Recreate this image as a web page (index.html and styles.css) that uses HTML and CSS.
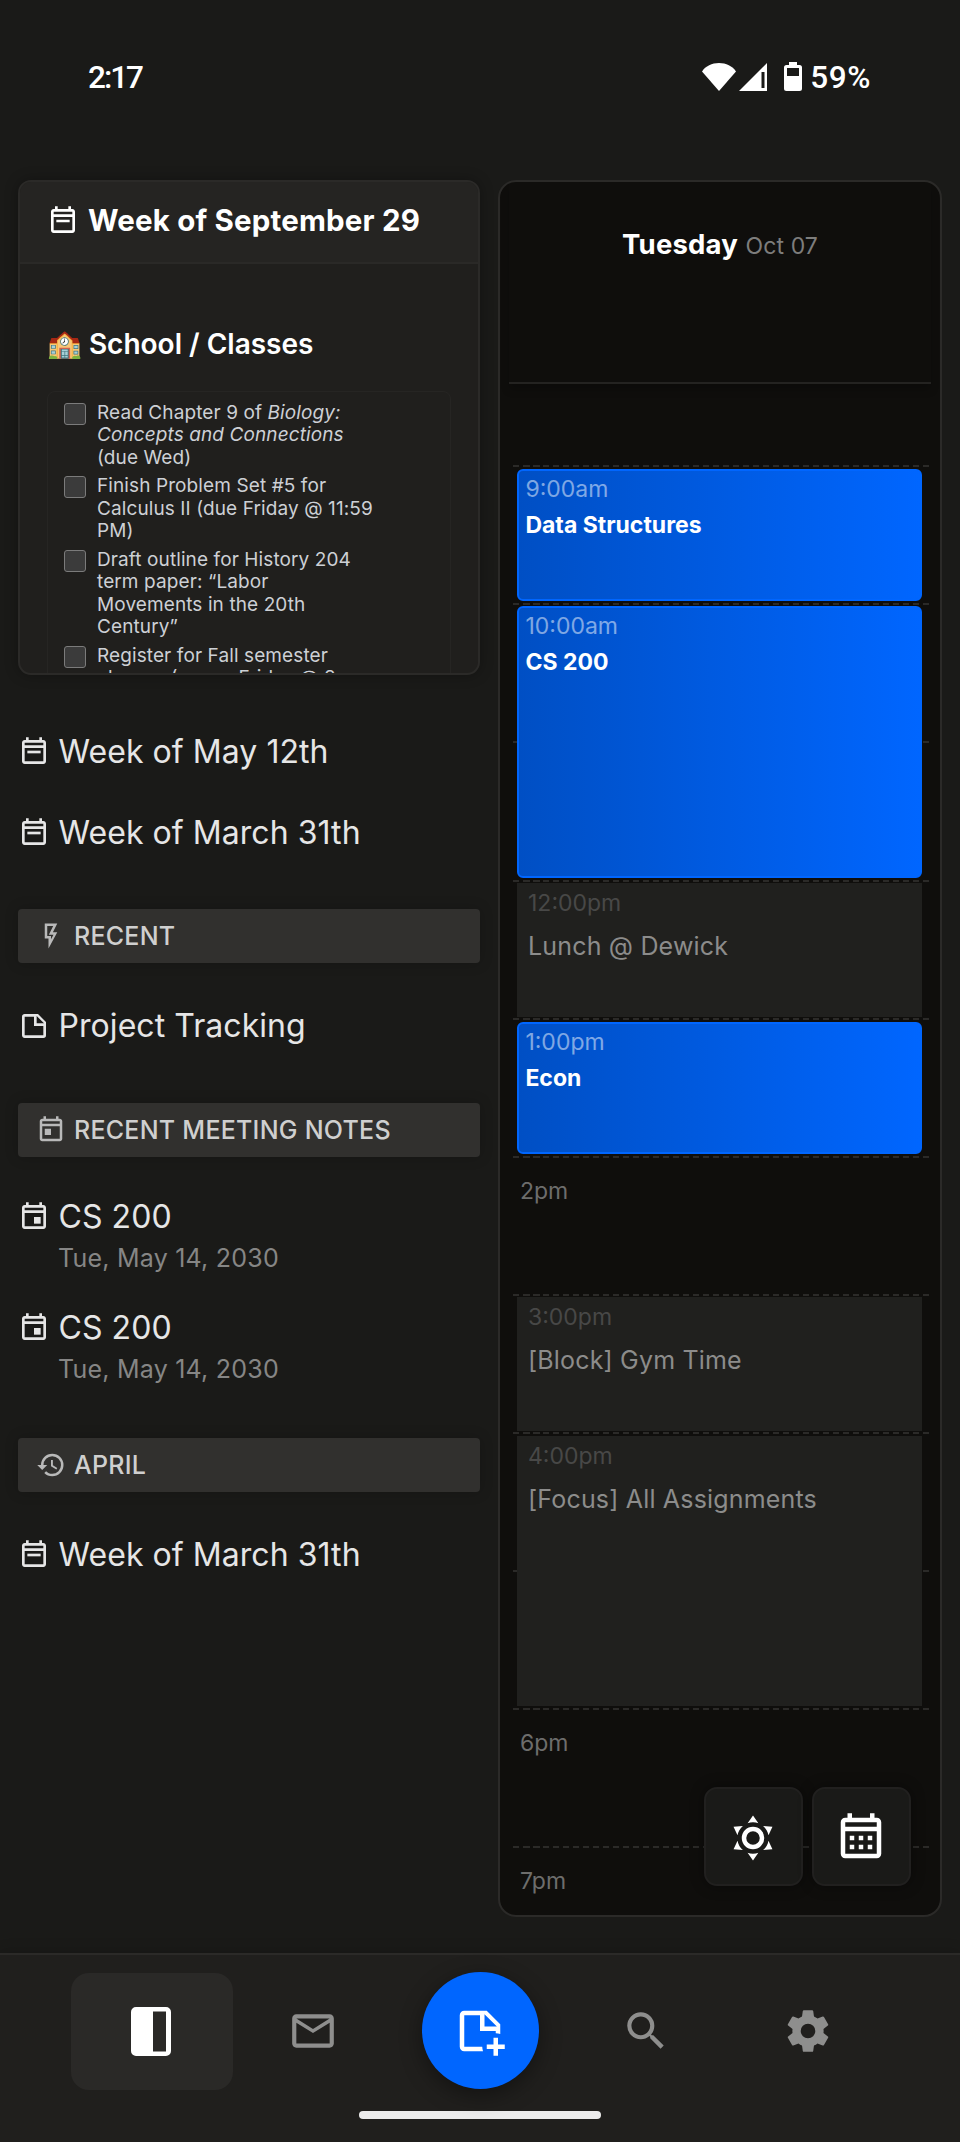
FILE: index.html
```html
<!DOCTYPE html>
<html lang="en">
  <head>
    <meta charset="UTF-8" />
    <meta name="viewport" content="width=device-width, initial-scale=1.0" />
    <title>Notes</title>
    <link rel="stylesheet" href="styles.css">
  </head>

  <body>
    <!-- shared icons -->
    <svg class="sprite">
      <symbol id="cal" viewBox="0 0 24 24">
        <path d="M19 3H18V1H16V3H8V1H6V3H5C3.89 3 3 3.9 3 5V19C3 20.1 3.89 21 5 21H19C20.1 21 21 20.1 21 19V5C21 3.9 20.1 3 19 3M19 19H5V9H19V19M19 7H5V5H19V7Z" />
      </symbol>
      <symbol id="cal-week" viewBox="0 0 24 24">
        <use href="#cal" width="24" height="24" />
        <path d="M7 11H17V13H7Z" />
      </symbol>
      <symbol id="cal-event" viewBox="0 0 24 24">
        <use href="#cal" width="24" height="24" />
        <path d="M12 12H17V17H12Z" />
      </symbol>
      <symbol id="cal-today" viewBox="0 0 24 24">
        <use href="#cal" width="24" height="24" />
        <path d="M7 11H12V16H7Z" />
      </symbol>
      <symbol id="cal-month" viewBox="0 0 24 24">
        <use href="#cal" width="24" height="24" />
        <path d="M7 11H9V13H7ZM11 11H13V13H11ZM15 11H17V13H15ZM7 15H9V17H7ZM11 15H13V17H11ZM15 15H17V17H15Z" />
      </symbol>
    </svg>

    <div class="status">
      <div class="clock">2:17</div>
      <div class="status-icons">
        <svg class="wifi" viewBox="0 0 34 28"><path d="M17 28L0 8.5C3.5 3 10 0 17 0S30.500 3 34 8.500Z" /></svg>
        <svg class="signal" viewBox="0 0 28 28"><path d="M28 0V28H0ZM22.500 9V25H25.500V9Z" fill-rule="evenodd" /></svg>
        <svg class="battery" viewBox="0 0 18 29"><path d="M5 0H13V3H15.500A2.500 2.500 0 0 1 18 5.500V26.500A2.500 2.500 0 0 1 15.500 29H2.500A2.500 2.500 0 0 1 0 26.500V5.500A2.500 2.500 0 0 1 2.500 3H5ZM3 6V14H15V6Z" fill-rule="evenodd" /></svg>
        <span class="percent">59%</span>
      </div>
    </div>

    <div class="main">
      <div class="left">
        <div class="note-card">
          <div class="note-header">
            <svg class="icon"><use href="#cal-week" /></svg>
            <span>Week of September 29</span>
          </div>
          <div class="note-body">
            <div class="note-title"><span class="emoji">🏫</span>School / Classes</div>
            <div class="tasks">
              <div class="task"><div class="check"></div><div class="task-text">Read Chapter 9 of <i>Biology:<br />Concepts and Connections</i><br />(due Wed)</div></div>
              <div class="task"><div class="check"></div><div class="task-text">Finish Problem Set #5 for<br />Calculus II (due Friday @ 11:59<br />PM)</div></div>
              <div class="task"><div class="check"></div><div class="task-text">Draft outline for History 204<br />term paper: “Labor<br />Movements in the 20th<br />Century”</div></div>
              <div class="task"><div class="check"></div><div class="task-text">Register for Fall semester<br />classes (opens Friday @ 8</div></div>
            </div>
          </div>
        </div>

        <div class="pinned">
          <div class="item"><svg class="icon"><use href="#cal-week" /></svg><span>Week of May 12th</span></div>
          <div class="item"><svg class="icon"><use href="#cal-week" /></svg><span>Week of March 31th</span></div>
        </div>

        <div class="bar">
          <svg class="bar-icon" viewBox="0 0 24 24"><path d="M7,2H17L13.5,9H17L10,22V14H7V2M9,4V12H12V14.66L14,11H10.24L13.76,4H9Z" /></svg>
          <span>RECENT</span>
        </div>
        <div class="item">
          <svg class="icon" viewBox="0 0 24 24"><path d="M14,10H19.5L14,4.5V10M5,3H15L21,9V19A2,2 0 0,1 19,21H5C3.89,21 3,20.1 3,19V5C3,3.89 3.89,3 5,3M5,5V19H19V12H12V5H5Z" /></svg>
          <span>Project Tracking</span>
        </div>

        <div class="bar">
          <svg class="bar-icon"><use href="#cal-today" /></svg>
          <span>RECENT MEETING NOTES</span>
        </div>
        <div class="meeting">
          <div class="item"><svg class="icon"><use href="#cal-event" /></svg><span>CS 200</span></div>
          <div class="date">Tue, May 14, 2030</div>
        </div>
        <div class="meeting">
          <div class="item"><svg class="icon"><use href="#cal-event" /></svg><span>CS 200</span></div>
          <div class="date">Tue, May 14, 2030</div>
        </div>

        <div class="bar">
          <svg class="bar-icon" viewBox="0 0 24 24"><path d="M13.5,8H12V13L16.28,15.54L17,14.33L13.5,12.25V8M13,3A9,9 0 0,0 4,12H1L4.96,16.03L9,12H6A7,7 0 0,1 13,5A7,7 0 0,1 20,12A7,7 0 0,1 13,19C11.07,19 9.32,18.21 8.06,16.94L6.64,18.36C8.27,20 10.5,21 13,21A9,9 0 0,0 22,12A9,9 0 0,0 13,3" /></svg>
          <span>APRIL</span>
        </div>
        <div class="item"><svg class="icon"><use href="#cal-week" /></svg><span>Week of March 31th</span></div>
      </div>

      <div class="day">
        <div class="day-header">
          <span class="weekday">Tuesday</span>
          <span class="monthday">Oct 07</span>
        </div>
        <div class="hours">
          <div class="hour h9"></div>
          <div class="hour h10"></div>
          <div class="hour h11"></div>
          <div class="hour h12"></div>
          <div class="hour h13"></div>
          <div class="hour h14">2pm</div>
          <div class="hour h15"></div>
          <div class="hour h16"></div>
          <div class="hour h17"></div>
          <div class="hour h18">6pm</div>
          <div class="hour h19">7pm</div>

          <div class="event h9"><div class="time">9:00am</div><div class="name">Data Structures</div></div>
          <div class="event h10 two"><div class="time">10:00am</div><div class="name">CS 200</div></div>
          <div class="block h12"><div class="time">12:00pm</div><div class="name">Lunch @ Dewick</div></div>
          <div class="event h13"><div class="time">1:00pm</div><div class="name">Econ</div></div>
          <div class="block h15"><div class="time">3:00pm</div><div class="name">[Block] Gym Time</div></div>
          <div class="block h16 two"><div class="time">4:00pm</div><div class="name">[Focus] All Assignments</div></div>
        </div>
        <div class="floating">
          <div class="float-btn">
            <svg viewBox="0 0 24 24"><path d="M12,7A5,5 0 0,1 17,12A5,5 0 0,1 12,17A5,5 0 0,1 7,12A5,5 0 0,1 12,7M12,9A3,3 0 0,0 9,12A3,3 0 0,0 12,15A3,3 0 0,0 15,12A3,3 0 0,0 12,9M12,2L14.39,5.42C13.65,5.15 12.84,5 12,5C11.16,5 10.35,5.15 9.61,5.42L12,2M3.34,7L7.5,6.65C6.9,7.16 6.36,7.78 5.94,8.5C5.5,9.24 5.25,10 5.11,10.79L3.34,7M3.36,17L5.12,13.23C5.26,14 5.53,14.78 5.95,15.5C6.37,16.24 6.91,16.86 7.5,17.37L3.36,17M20.65,7L18.88,10.79C18.74,10 18.47,9.23 18.05,8.5C17.63,7.78 17.1,7.15 16.5,6.64L20.65,7M20.64,17L16.5,17.36C17.09,16.85 17.62,16.22 18.04,15.5C18.46,14.77 18.73,14 18.87,13.21L20.64,17M12,22L9.59,18.56C10.33,18.83 11.14,19 12,19C12.82,19 13.63,18.83 14.37,18.56L12,22Z" /></svg>
          </div>
          <div class="float-btn"><svg><use href="#cal-month" /></svg></div>
        </div>
      </div>
    </div>

    <div class="nav">
      <div class="tabs">
        <div class="tab active">
          <svg class="panel" viewBox="0 0 40 49"><path d="M5 0H35A5 5 0 0 1 40 5V44A5 5 0 0 1 35 49H5A5 5 0 0 1 0 44V5A5 5 0 0 1 5 0ZM22 4.500V44.500H35V4.500Z" fill-rule="evenodd" /></svg>
        </div>
        <div class="tab">
          <svg viewBox="0 0 24 24"><path d="M22 6C22 4.9 21.1 4 20 4H4C2.9 4 2 4.9 2 6V18C2 19.1 2.9 20 4 20H20C21.1 20 22 19.1 22 18V6M20 6L12 11L4 6H20M20 18H4V8L12 13L20 8V18Z" /></svg>
        </div>
        <div class="add-slot">
          <div class="add">
            <svg viewBox="0 0 24 24"><path d="M15 3H5C3.9 3 3 3.9 3 5V19C3 20.1 3.9 21 5 21H13.35C13.13 20.37 13 19.7 13 19H5V5H12V12H19V13C19.7 13 20.37 13.13 21 13.35V9L15 3M14 10V4.5L19.5 10H14M23 18V20H20V23H18V20H15V18H18V15H20V18H23Z" /></svg>
          </div>
        </div>
        <div class="tab">
          <svg viewBox="0 0 24 24"><path d="M9.5,3A6.5,6.5 0 0,1 16,9.5C16,11.11 15.41,12.59 14.44,13.73L14.71,14H15.5L20.5,19L19,20.5L14,15.5V14.71L13.73,14.44C12.59,15.41 11.11,16 9.5,16A6.5,6.5 0 0,1 3,9.5A6.5,6.5 0 0,1 9.5,3M9.5,5C7,5 5,7 5,9.5C5,12 7,14 9.5,14C12,14 14,12 14,9.5C14,7 12,5 9.5,5Z" /></svg>
        </div>
        <div class="tab">
          <svg viewBox="0 0 24 24"><path d="M12,15.5A3.5,3.5 0 0,1 8.5,12A3.5,3.5 0 0,1 12,8.5A3.5,3.5 0 0,1 15.5,12A3.5,3.5 0 0,1 12,15.5M19.43,12.97C19.47,12.65 19.5,12.33 19.5,12C19.5,11.67 19.47,11.34 19.43,11L21.54,9.37C21.73,9.22 21.78,8.95 21.66,8.73L19.66,5.27C19.54,5.05 19.27,4.96 19.05,5.05L16.56,6.05C16.04,5.66 15.5,5.32 14.87,5.07L14.5,2.42C14.46,2.18 14.25,2 14,2H10C9.75,2 9.54,2.18 9.5,2.42L9.13,5.07C8.5,5.32 7.96,5.66 7.44,6.05L4.95,5.05C4.73,4.96 4.46,5.05 4.34,5.27L2.34,8.73C2.21,8.95 2.27,9.22 2.46,9.37L4.57,11C4.53,11.34 4.5,11.67 4.5,12C4.5,12.33 4.53,12.65 4.57,12.97L2.46,14.63C2.27,14.78 2.21,15.05 2.34,15.27L4.34,18.73C4.46,18.95 4.73,19.03 4.95,18.95L7.44,17.94C7.96,18.34 8.5,18.68 9.13,18.93L9.5,21.58C9.54,21.82 9.75,22 10,22H14C14.25,22 14.46,21.82 14.5,21.58L14.87,18.93C15.5,18.67 16.04,18.34 16.56,17.94L19.05,18.95C19.27,19.03 19.54,18.95 19.66,18.73L21.66,15.27C21.78,15.05 21.73,14.78 21.54,14.63L19.43,12.97Z" /></svg>
        </div>
      </div>
      <div class="home-bar"></div>
    </div>
  </body>
</html>
```
FILE: styles.css
```css
* {
  box-sizing: border-box;
}

body {
  margin: 0;
  height: 2142px;
  display: flex;
  flex-direction: column;
  background-color: #1a1a18;
  color: #e6e6e6;
  font-family: 'Inter', 'Liberation Sans', sans-serif;
  white-space: nowrap;
  overflow: hidden;
}

svg {
  display: block;
  flex-shrink: 0;
  fill: currentColor;
}

.sprite {
  display: none;
}

/* status bar */
.status {
  height: 180px;
  flex-shrink: 0;
  padding: 61px 89px 0 88px;
  display: flex;
  justify-content: space-between;
  align-items: flex-start;
  color: white;
  font-family: 'Roboto', sans-serif;
  font-size: 31.5px;
  font-weight: 500;
  line-height: 34px;
}

.clock {
  letter-spacing: -2px;
}

.percent {
  letter-spacing: 0.6px;
}

.status-icons {
  display: flex;
}

.wifi {
  width: 34px;
  height: 28px;
  margin: 2px 3px 0 0;
}

.signal {
  width: 28px;
  height: 28px;
  margin: 2px 17px 0 0;
}

.battery {
  width: 18px;
  height: 29px;
  margin: 1px 8px 0 0;
}

.main {
  height: 1737px;
  flex-shrink: 0;
  display: flex;
  gap: 18px;
  padding: 0 18px;
}

.left {
  width: 462px;
}

/* preview of the current week */
.note-card {
  height: 495px;
  border: 2px solid #2b2a28;
  border-radius: 13px;
  background-color: #201f1d;
  box-shadow: 0 0 14px rgba(0, 0, 0, 0.3);
  overflow: hidden;
}

.note-header {
  height: 82px;
  padding: 0 0 2px 27px;
  border-bottom: 2px solid #2a2927;
  background-color: #252422;
  display: flex;
  align-items: center;
  gap: 9px;
  color: white;
  font-size: 29.5px;
  font-weight: 700;
  letter-spacing: 0.17px;
}

.note-header span {
  margin-top: -2px;
}

.icon {
  width: 32px;
  height: 32px;
}

.note-body {
  padding: 60px 27px 0;
}

.note-title {
  height: 40px;
  line-height: 40px;
  color: white;
  font-size: 28px;
  font-weight: 600;
}

.emoji {
  font-family: 'Noto Color Emoji';
  font-size: 28px;
  line-height: 1;
  margin-right: 7px;
  vertical-align: 1px;
}

.tasks {
  margin-top: 27px;
  padding: 10px 16px;
  border: 1px solid #262523;
  border-radius: 8px;
}

.task {
  display: flex;
  margin-bottom: 6.6px;
}

.check {
  width: 22px;
  height: 22px;
  margin-top: 1px;
  border: 1px solid #7b7b7b;
  border-radius: 3px;
  background-color: #3b3b3b;
}

.task-text {
  margin-left: 11px;
  color: #cdd0d5;
  font-size: 19px;
  line-height: 22.3px;
  letter-spacing: 0.1px;
}

/* list of notes */
.pinned {
  margin: 36px 0 -1px;
}

.item {
  height: 81px;
  display: flex;
  align-items: center;
  gap: 8.5px;
  font-size: 32px;
  letter-spacing: 0.06px;
}

.item .icon {
  margin-top: 1px;
}

.bar {
  height: 54px;
  margin: 37px 0 22px;
  padding: 0 0 0 18px;
  border-radius: 4px;
  background-color: #31302e;
  box-shadow: 0 0 14px rgba(0, 0, 0, 0.2);
  display: flex;
  align-items: center;
  gap: 8px;
  color: #cfcfcf;
  font-size: 25px;
  font-weight: 500;
  letter-spacing: 0.25px;
}

.bar-icon {
  width: 30px;
  height: 30px;
  color: #b9b9b9;
}

.meeting {
  height: 111px;
}

.meeting .item {
  height: 75px;
}

.date {
  height: 30px;
  margin-top: -11px;
  padding-left: 40px;
  line-height: 30px;
  color: #868685;
  font-size: 25px;
  letter-spacing: 0.22px;
}

/* day calendar */
.day {
  position: relative;
  width: 444px;
  padding: 0 9px;
  border: 2px solid #2b2a28;
  border-radius: 18px;
  background-color: #0f0e0c;
  overflow: hidden;
}

.day-header {
  height: 202px;
  padding-top: 42px;
  border-bottom: 2px solid #242321;
  box-shadow: 0 6px 8px rgba(0, 0, 0, 0.2);
  line-height: 40px;
  text-align: center;
}

.weekday {
  color: white;
  font-size: 27.5px;
  font-weight: 700;
  letter-spacing: 0.2px;
}

.monthday {
  margin-left: 3px;
  color: #7d7d7c;
  font-size: 23px;
  letter-spacing: 0.1px;
}

.hours {
  margin-top: 81.3px;
  display: grid;
  grid-template-rows: repeat(11, 138.09px);
}

.hour {
  grid-column: 1;
  padding: 20px 0 0 11px;
  background: repeating-linear-gradient(90deg, #2b2a28 0 0.5px, transparent 0.5px 4px, #2b2a28 4px 10px) 0 0 / 420px 2px no-repeat;
  color: #6d6d6c;
  font-size: 23px;
  line-height: 30px;
}

.event,
.block {
  grid-column: 1;
  margin: 4px 9px 2px 8px;
  line-height: 30px;
}

.event {
  padding: 3px 6.4px;
  border: 2px solid #0066ff;
  border-radius: 6px;
  background: linear-gradient(90deg, #004fc4, #0066ff);
}

.event .time {
  color: rgba(255, 255, 255, 0.5);
  font-size: 23px;
}

.event .name {
  margin-top: 6px;
  color: white;
  font-size: 23px;
  font-weight: 700;
}

.block {
  margin: 3px 9px 1px 8px;
  padding: 5px 11px;
  background-color: #20201e;
}

.block .time {
  color: #484847;
  font-size: 23px;
}

.block .name {
  margin-top: 13px;
  color: #8c8c8b;
  font-size: 25px;
  letter-spacing: 0.18px;
}

.h9 { grid-row: 1; }
.h10 { grid-row: 2; }
.h11 { grid-row: 3; }
.h12 { grid-row: 4; }
.h13 { grid-row: 5; }
.h14 { grid-row: 6; }
.h15 { grid-row: 7; }
.h16 { grid-row: 8; }
.h17 { grid-row: 9; }
.h18 { grid-row: 10; }
.h19 { grid-row: 11; }

.h10.two {
  grid-row: 2 / span 2;
  margin-top: 3px;
}

.h16.two {
  grid-row: 8 / span 2;
  margin-top: 4px;
  margin-bottom: 2px;
}

/* buttons on top of the calendar */
.floating {
  position: absolute;
  right: 29px;
  bottom: 29px;
  display: flex;
  gap: 9px;
}

.float-btn {
  width: 99px;
  height: 99px;
  padding: 2px 1px 0 0;
  border: 2px solid #21201f;
  border-radius: 13px;
  background-color: #1a1a18;
  box-shadow: 0 0 14px rgba(0, 0, 0, 0.4);
  display: flex;
  align-items: center;
  justify-content: center;
  color: white;
}

.float-btn svg {
  width: 54px;
  height: 54px;
}

/* bottom navigation */
.nav {
  height: 189px;
  margin-top: 36px;
  flex-shrink: 0;
  padding: 18px 70px 0 71px;
  border-top: 2px solid #2b2a28;
  background-color: #201f1d;
  box-shadow: 0 0 14px rgba(0, 0, 0, 0.2);
}

.tabs {
  height: 117px;
  display: flex;
}

.tab {
  width: 162px;
  display: flex;
  align-items: center;
  justify-content: center;
  color: #8e8e8d;
}

.tab svg {
  width: 50px;
  height: 50px;
  margin: -2px 2px 0 0;
}

.active {
  border-radius: 18px;
  background-color: #2a2927;
  color: white;
}

.tab .panel {
  width: 40px;
  height: 49px;
  margin-top: 0;
}

.add-slot {
  flex: 1;
  display: flex;
  justify-content: center;
}

.add {
  width: 117px;
  height: 117px;
  margin-top: -1px;
  padding-right: 1px;
  border-radius: 50%;
  background-color: #0066ff;
  box-shadow: 0 6px 22px rgba(0, 0, 0, 0.4);
  display: flex;
  align-items: center;
  justify-content: center;
  color: white;
}

.add svg {
  width: 54px;
  height: 54px;
}

.home-bar {
  width: 242px;
  height: 8px;
  margin: 21px 0 0 288px;
  border-radius: 4px;
  background-color: #ececec;
}
```
